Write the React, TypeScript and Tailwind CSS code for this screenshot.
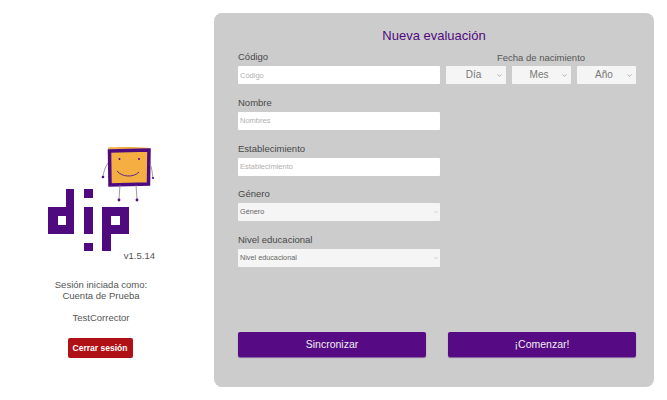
import { ChevronDown } from "lucide-react"

function Logo() {
  // offset by 41,145 from page coordinates
  return (
    <svg width="120" height="108" viewBox="41 145 120 108" className="block">
      {/* character */}
      <path d="M108 147.5 C120 146.5 138 147 149 148 L149 153 L108 153 Z" fill="#f4ae42" />
      <rect x="110" y="151" width="38" height="33" fill="#f4ae42" />
      <path d="M109.5 151 L149 150 L148.5 184 L110 185 Z" fill="none" stroke="#4f0a80" strokeWidth="3.5" />
      <circle cx="119.5" cy="159" r="1" fill="#4f0a80" />
      <circle cx="139" cy="159" r="1" fill="#4f0a80" />
      <path d="M117 171 C122 177 133 178 139 172" fill="none" stroke="#5a2a80" strokeWidth="1" />
      <path d="M108 163 C105 167 104 171 103 176" fill="none" stroke="#8a7a9a" strokeWidth="0.8" />
      <path d="M150 164 C152 168 152 172 153 178" fill="none" stroke="#8a7a9a" strokeWidth="0.8" />
      <path d="M120 185 L119 199" fill="none" stroke="#8a7a9a" strokeWidth="0.8" />
      <path d="M136 185 L137 199" fill="none" stroke="#8a7a9a" strokeWidth="0.8" />
      <circle cx="103" cy="177" r="1.3" fill="#4f0a80" />
      <circle cx="153" cy="178" r="1.1" fill="#4f0a80" />
      <circle cx="119" cy="200" r="1.4" fill="#4f0a80" />
      <circle cx="137" cy="200" r="1.4" fill="#4f0a80" />
      {/* d */}
      <path fillRule="evenodd" fill="#4f0a80" d="M66 189 H74 V234 H48 V207 H66 Z M58 216 V225 H66 V216 Z" />
      {/* i */}
      <path fill="#4f0a80" d="M84 189 H93 V198 H84 Z M84 207 H93 V234 H84 Z M84 243 H93 V251 H84 Z" />
      {/* p */}
      <path fillRule="evenodd" fill="#4f0a80" d="M102 207 H129 V234 H111 V251 H102 Z M111 216 V225 H120 V216 Z" />
    </svg>
  )
}

function TextField({ label, placeholder }: { label: string; placeholder: string }) {
  return (
    <div className="flex flex-col">
      <label className="h-[15px] text-[9.5px] leading-[12px] text-[#484848]">{label}</label>
      <input
        placeholder={placeholder}
        className="h-[18px] w-[202px] rounded-[1px] bg-white px-[2px] text-[7.5px] outline-none placeholder:text-[#b0b0b0]"
      />
    </div>
  )
}

function SelectField({ label, text }: { label: string; text: string }) {
  return (
    <div className="flex flex-col">
      <label className="h-[15px] text-[9.5px] leading-[12px] text-[#484848]">{label}</label>
      <div className="relative h-[18px] w-[202px] rounded-[1px] bg-[#f5f5f5] pl-[2px] text-[7.25px] leading-[18px] text-[#666]">
        {text}
        <ChevronDown className="absolute right-[1px] top-[6px] text-[#aaa]" size={6} />
      </div>
    </div>
  )
}

function DateSelect({ text, width }: { text: string; width: string }) {
  return (
    <div className={`relative h-[18px] ${width} rounded-[1px] bg-[#f5f5f5] pr-[5px] text-center text-[10px] leading-[18px] text-[#777]`}>
      {text}
      <ChevronDown className="absolute right-[3px] top-[6px] text-[#888]" size={7} />
    </div>
  )
}

export default function App() {
  return (
    <div className="flex h-[400px] w-[667px] bg-white font-['Liberation_Sans',sans-serif]">
      {/* Sidebar */}
      <div className="flex w-[202px] shrink-0 flex-col items-center pt-[145px]">
        <Logo />
        <div className="mt-[-3px] h-[12px] w-[120px] pr-[6px] text-right text-[9.5px] leading-[12px] text-[#555]">v1.5.14</div>
        <div className="mt-[17px] text-center text-[9.5px] leading-[11px] text-[#555]">
          <div>Sesión iniciada como:</div>
          <div>Cuenta de Prueba</div>
        </div>
        <div className="mt-[11px] text-[9.5px] leading-[11px] text-[#555]">TestCorrector</div>
        <button className="mr-[2px] mt-[15px] h-[20px] w-[65px] rounded-[2px] bg-[#b01116] text-[8.5px] font-bold text-white">
          Cerrar sesión
        </button>
      </div>

      {/* Form panel */}
      <div className="ml-[12px] mt-[13px] flex h-[374px] w-[440px] flex-col rounded-[8px] bg-[#cccccc] pl-[24px] pr-[18px] pt-[14px] pb-[30px]">
        <h1 className="pr-[6px] text-center text-[13px] font-medium leading-[17px] text-[#4f0a80]">Nueva evaluación</h1>
        <div className="mt-[7px] flex gap-[6px]">
          <div className="flex flex-col gap-[12.75px]">
            <TextField label="Código" placeholder="Código" />
            <TextField label="Nombre" placeholder="Nombres" />
            <TextField label="Establecimiento" placeholder="Establecimiento" />
            <SelectField label="Género" text="Género" />
            <SelectField label="Nivel educacional" text="Nivel educacional" />
          </div>
          <div className="flex flex-col pt-[1px]">
            <div className="h-[14px] text-center text-[9.5px] leading-[12px] text-[#555]">Fecha de nacimiento</div>
            <div className="flex gap-[6px]">
              <DateSelect text="Día" width="w-[60px]" />
              <DateSelect text="Mes" width="w-[59px]" />
              <DateSelect text="Año" width="w-[59px]" />
            </div>
          </div>
        </div>
        <div className="mt-auto flex gap-[22px]">
          <button className="h-[25px] w-[188px] rounded-[2px] bg-[#560b85] text-[10.5px] text-[#eee] shadow-[0_1px_1px_rgba(80,20,130,0.6)]">Sincronizar</button>
          <button className="h-[25px] w-[188px] rounded-[2px] bg-[#560b85] text-[10.5px] text-[#eee] shadow-[0_1px_1px_rgba(80,20,130,0.6)]">¡Comenzar!</button>
        </div>
      </div>
    </div>
  )
}
